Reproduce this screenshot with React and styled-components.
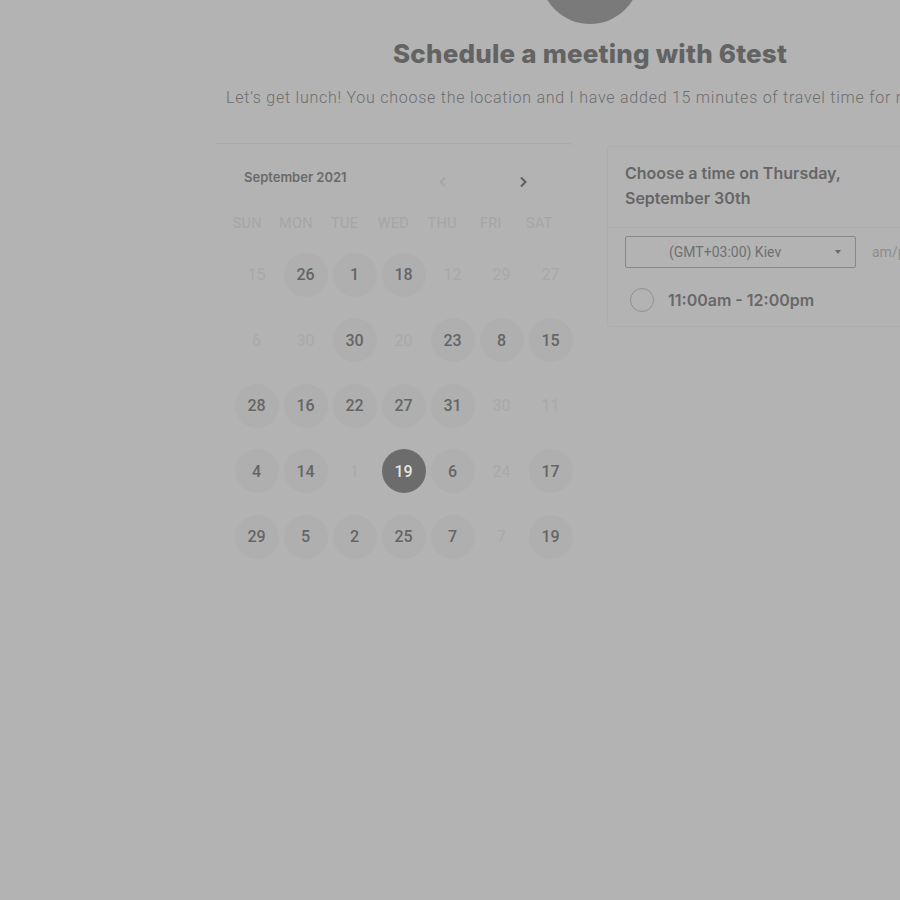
import React from "react";
import styled, { createGlobalStyle } from "styled-components";

const GlobalStyle = createGlobalStyle`
  html, body {
    margin: 0;
    padding: 0;
    background: #b3b3b3;
    overflow: hidden;
  }
  body {
    font-family: "Roboto", "Liberation Sans", sans-serif;
  }
`;

const weekdays = ["SUN", "MON", "TUE", "WED", "THU", "FRI", "SAT"];

// d = disabled, s = selected
const weeks = [
  [["15", "d"], ["26"], ["1"], ["18"], ["12", "d"], ["29", "d"], ["27", "d"]],
  [["6", "d"], ["30", "d"], ["30"], ["20", "d"], ["23"], ["8"], ["15"]],
  [["28"], ["16"], ["22"], ["27"], ["31"], ["30", "d"], ["11", "d"]],
  [["4"], ["14"], ["1", "d"], ["19", "s"], ["6"], ["24", "d"], ["17"]],
  [["29"], ["5"], ["2"], ["25"], ["7"], ["7", "d"], ["19"]],
];

const Chevron = ({ dir, light }) => (
  <svg width="14" height="14" viewBox="0 0 14 14" fill="none">
    <path
      d={dir === "left" ? "M9 2.5 L4.5 7 L9 11.5" : "M5 2.5 L9.5 7 L5 11.5"}
      stroke={light ? "#a6a6a6" : "#5f5f5f"}
      strokeWidth="2"
    />
  </svg>
);

const App = () => {
  return (
    <Page>
      <GlobalStyle />
      <Container>
        <Avatar />
        <Title>Schedule a meeting with 6test</Title>
        <Intro>
          Let’s get lunch! You choose the location and I have added 15 minutes
          of travel time for me.
        </Intro>
        <Columns>
          <Calendar>
            <MonthBar>
              <Month>September 2021</Month>
              <NavButtons>
                <NavButton>
                  <Chevron dir="left" light />
                </NavButton>
                <NavButton>
                  <Chevron dir="right" />
                </NavButton>
              </NavButtons>
            </MonthBar>
            <WeekdayRow>
              {weekdays.map(w => (
                <Weekday key={w}>{w}</Weekday>
              ))}
            </WeekdayRow>
            <DaysGrid>
              {weeks.flat().map(([n, state], i) => (
                <DayCell key={i}>
                  <Day $state={state}>{n}</Day>
                </DayCell>
              ))}
            </DaysGrid>
          </Calendar>
          <TimePanel>
            <PanelHeader>
              Choose a time on Thursday,
              <br />
              September 30th
            </PanelHeader>
            <PanelBody>
              <ZoneRow>
                <ZoneSelect>
                  <span>(GMT+03:00) Kiev</span>
                  <Caret />
                </ZoneSelect>
                <Format>am/pm</Format>
              </ZoneRow>
              <Slot>
                <Radio />
                <SlotLabel>11:00am - 12:00pm</SlotLabel>
              </Slot>
            </PanelBody>
          </TimePanel>
        </Columns>
      </Container>
    </Page>
  );
};

const Page = styled.div`
  width: 1180px;
  height: 900px;
  display: flex;
  justify-content: center;
`;

const Container = styled.div`
  width: 750px;
  display: flex;
  flex-direction: column;
  align-items: center;
`;

const Avatar = styled.div`
  width: 100px;
  height: 100px;
  border-radius: 50%;
  background: #7a7a7a;
  margin-top: -76px;
`;

const Title = styled.h1`
  margin: 11px 0 0;
  font-family: "Inter", "Liberation Sans", sans-serif;
  font-weight: 800;
  font-size: 26px;
  line-height: 38px;
  color: #636363;
  letter-spacing: 0.2px;
`;

const Intro = styled.p`
  align-self: stretch;
  margin: 14px 0 0 11px;
  font-size: 16px;
  font-weight: 300;
  line-height: 22px;
  color: #6e6e6e;
  letter-spacing: 0.75px;
  white-space: nowrap;
`;

const Columns = styled.div`
  align-self: stretch;
  display: flex;
  gap: 35px;
  margin-top: 34px;
`;

const Calendar = styled.div`
  width: 357px;
  border-top: 1px solid #a9a9a9;
  border-radius: 4px;
`;

const MonthBar = styled.div`
  display: flex;
  align-items: center;
  justify-content: space-between;
  padding: 26px 0 0 29px;
  height: 24px;
`;

const Month = styled.div`
  font-family: "Inter", "Liberation Sans", sans-serif;
  font-size: 13px;
  font-weight: 600;
  color: #6a6a6a;
  margin-top: -10px;
`;

const NavButtons = styled.div`
  display: flex;
  gap: 66px;
  margin-right: 42px;
`;

const NavButton = styled.div`
  width: 14px;
  height: 14px;
  display: flex;
`;

const WeekdayRow = styled.div`
  display: grid;
  grid-template-columns: repeat(7, 48.7px);
  padding-left: 8px;
  margin-top: 20px;
`;

const Weekday = styled.div`
  text-align: center;
  font-size: 14.5px;
  line-height: 20px;
  color: #a6a6a6;
  letter-spacing: 0.3px;
`;

const DaysGrid = styled.div`
  display: grid;
  grid-template-columns: repeat(7, 49px);
  grid-auto-rows: 65.5px;
  padding-left: 17px;
  margin-top: 8px;
`;

const DayCell = styled.div`
  display: flex;
  align-items: center;
  justify-content: center;
`;

const Day = styled.div`
  width: 44px;
  height: 44px;
  border-radius: 50%;
  display: flex;
  align-items: center;
  justify-content: center;
  font-size: 16px;
  font-weight: ${p => (p.$state === "d" ? 400 : 500)};
  color: ${p =>
    p.$state === "d" ? "#a9a9a9" : p.$state === "s" ? "#e4e4e4" : "#656565"};
  background: ${p =>
    p.$state === "d" ? "transparent" : p.$state === "s" ? "#6c6c6c" : "#afafaf"};
`;

const TimePanel = styled.div`
  width: 358px;
  margin-top: 3px;
  align-self: flex-start;
  border: 1px solid #adadad;
  border-radius: 3px;
`;

const PanelHeader = styled.div`
  padding: 14px 18px 16px 17px;
  font-family: "Inter", "Liberation Sans", sans-serif;
  font-size: 16px;
  font-weight: 600;
  line-height: 25px;
  color: #666;
  border-bottom: 1px solid #adadad;
`;

const PanelBody = styled.div`
  padding: 8px 0 14px 17px;
`;

const ZoneRow = styled.div`
  display: flex;
  align-items: center;
  gap: 16px;
`;

const ZoneSelect = styled.div`
  height: 30px;
  border: 1px solid #878787;
  border-radius: 2px;
  display: flex;
  align-items: center;
  justify-content: space-between;
  padding: 0 14px 0 43px;
  box-sizing: content-box;
  width: 172px;
  font-size: 14px;
  color: #707070;
`;

const Caret = styled.span`
  width: 0;
  height: 0;
  border-left: 3.5px solid transparent;
  border-right: 3.5px solid transparent;
  border-top: 4px solid #6a6a6a;
`;

const Format = styled.span`
  font-size: 14px;
  color: #8c8c8c;
`;

const Slot = styled.div`
  display: flex;
  align-items: center;
  gap: 14px;
  margin-top: 20px;
`;

const Radio = styled.span`
  width: 22px;
  height: 22px;
  border: 1.5px solid #919191;
  border-radius: 50%;
  margin-left: 5px;
`;

const SlotLabel = styled.span`
  font-family: "Inter", "Liberation Sans", sans-serif;
  font-size: 16px;
  font-weight: 600;
  color: #686868;
`;

export default App;
